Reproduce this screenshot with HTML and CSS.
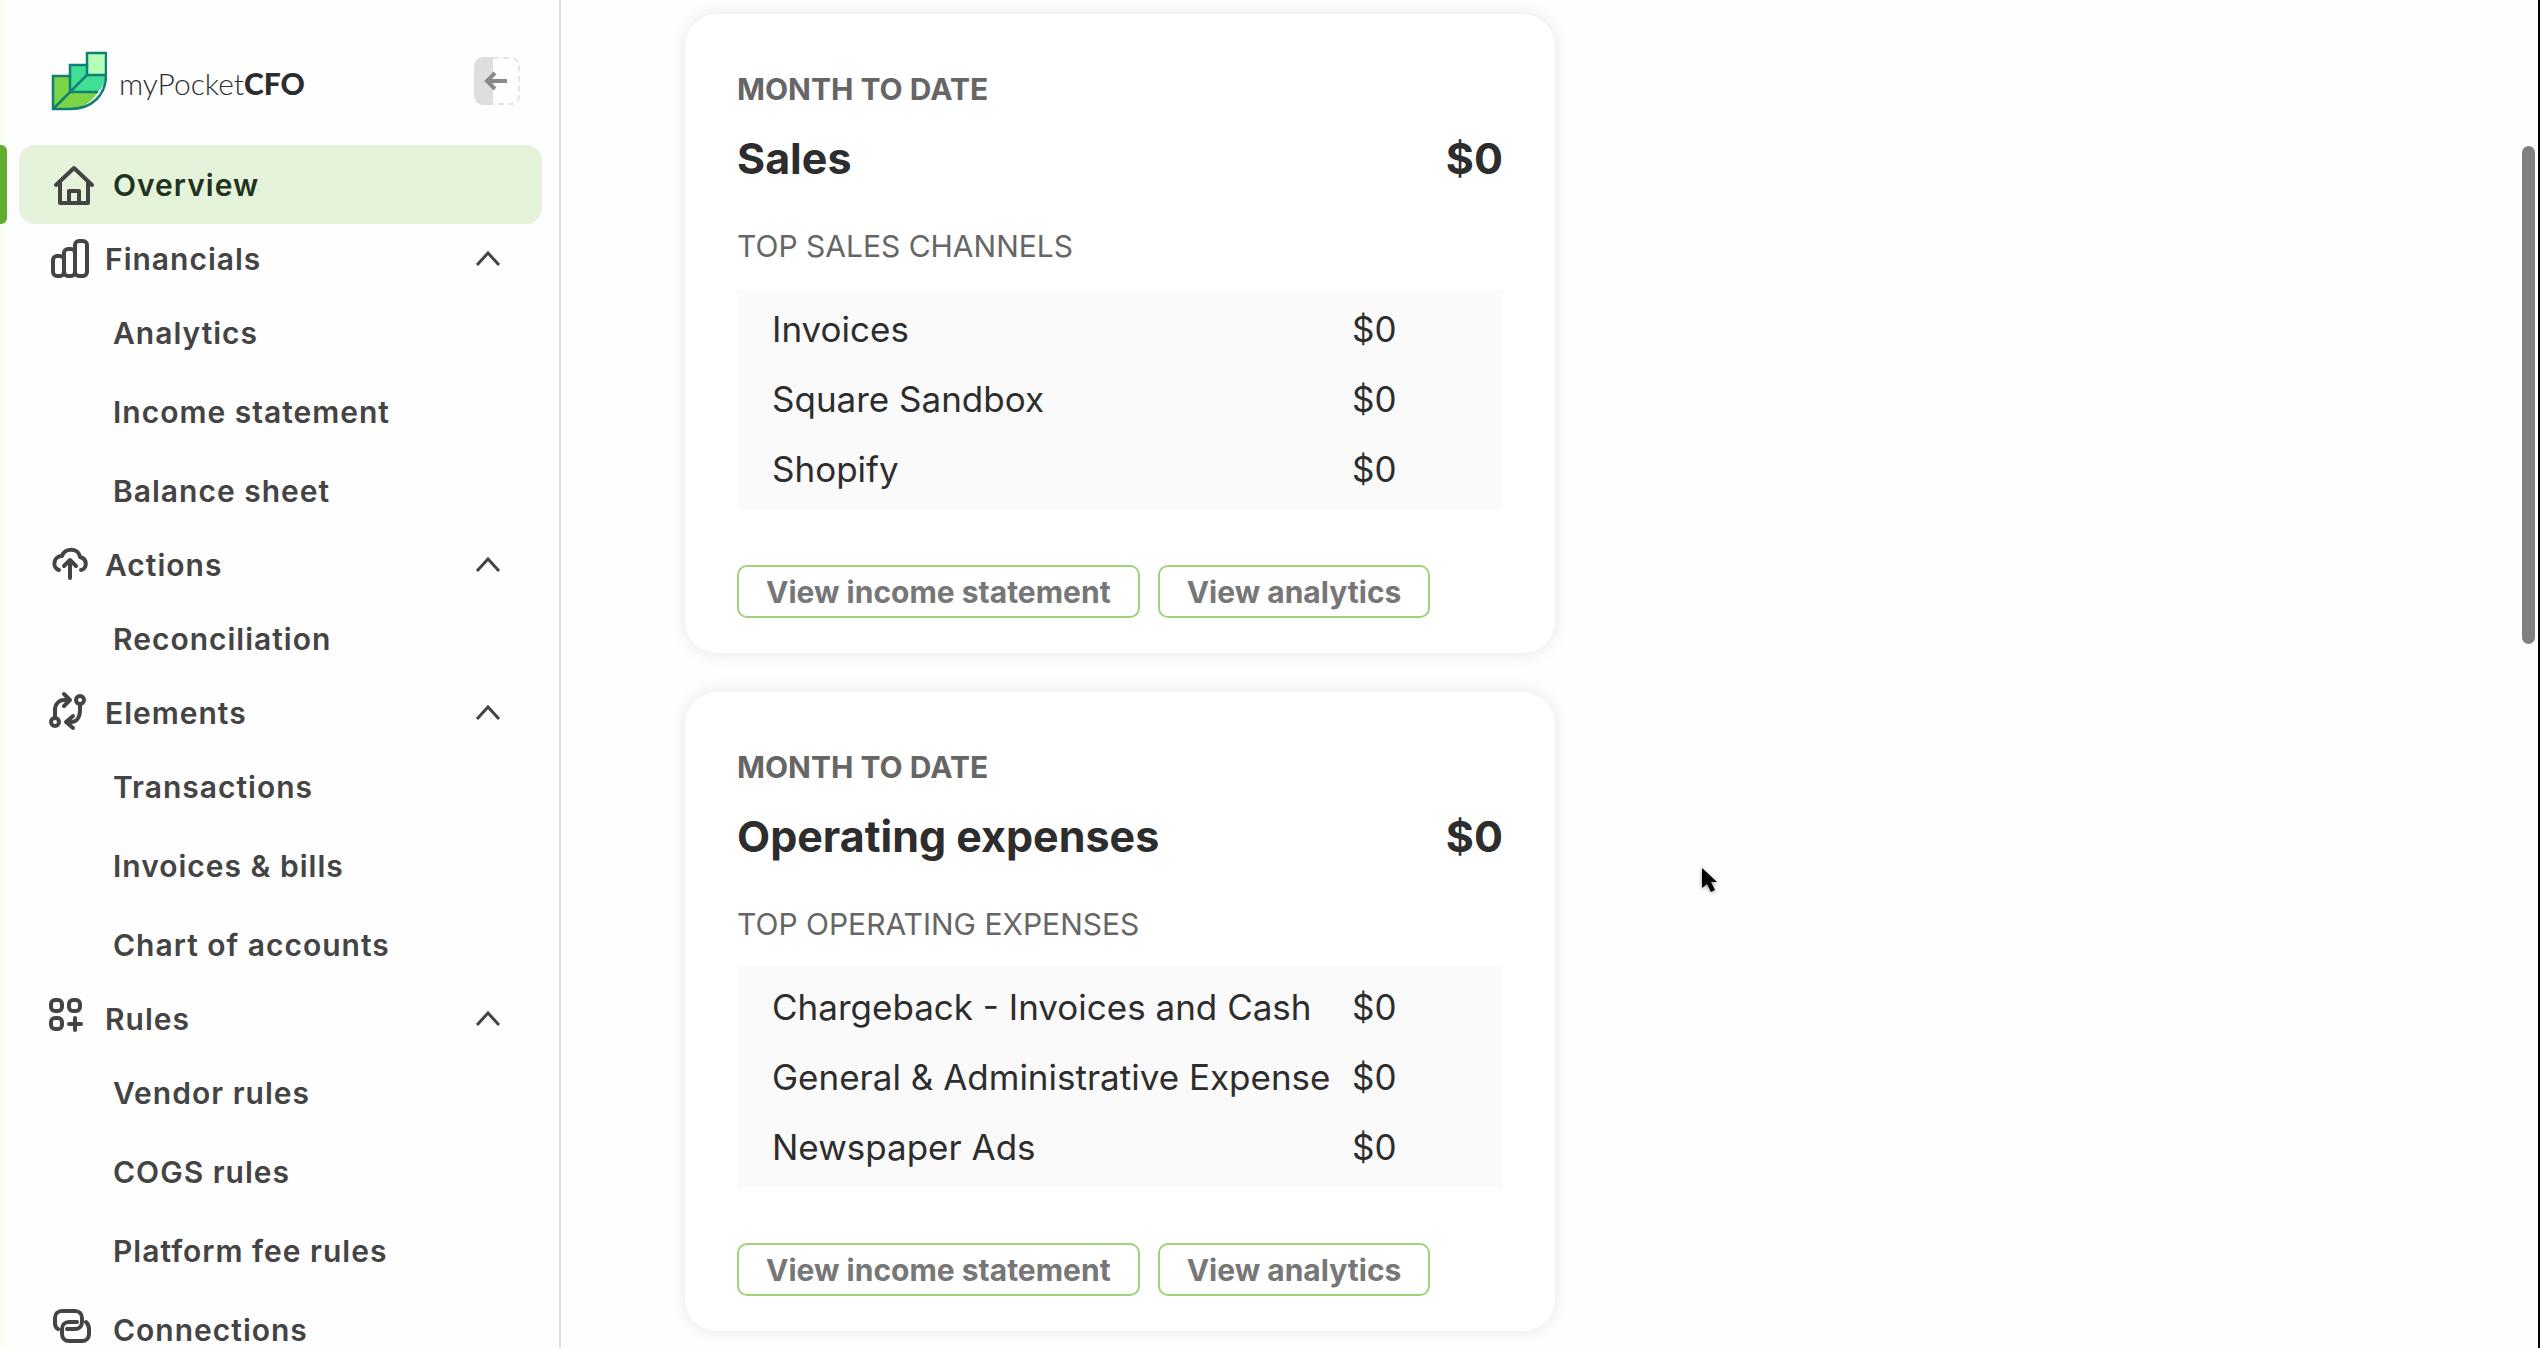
FILE: index.html
```html
<!DOCTYPE html>
<html lang="en">
<head>
    <meta charset="UTF-8">
    <meta name="viewport" content="width=device-width, initial-scale=1.0">
    <title>myPocketCFO</title>
    <link rel="stylesheet" href="styles.css">
</head>
<body>
<div class="app">
    <!-- Sidebar -->
    <aside class="sidebar">
        <div class="brand">
            <a class="logo" href="#">
                <svg class="logo-mark" viewBox="0 0 56 60" fill="none" stroke="#137f74" stroke-width="2.5">
                    <path d="M36 2h19v22H36z" fill="#b3ffb8" stroke="none"/>
                    <path d="M19 14h17v10h19c-1 7-4 13-8 17H19z" fill="#41df95" stroke="none"/>
                    <path d="M2 25h17v16h28c-7 11-17 17-31 17H2z" fill="#7ad443" stroke="none"/>
                    <path d="M2 58V25h17V14h17V2h19v22c0 20-14 34-36 34z"/>
                    <path d="M2 58l17-17 17-17V14M19 25v16h28M36 24h19"/>
                </svg>
                <span class="logo-text">myPocket<b>CFO</b></span>
            </a>
            <button class="collapse" type="button" aria-label="Collapse menu">
                <svg viewBox="0 0 48 50" fill="none">
                    <path d="M20 1H10a9 9 0 0 0-9 9v30a9 9 0 0 0 9 9h10z" fill="#dedede"/>
                    <path d="M20 2h18a8 8 0 0 1 8 8v30a8 8 0 0 1-8 8H20" stroke="#e4e4e4" stroke-width="2" stroke-dasharray="6 4"/>
                    <path d="M34 25H15M22 17l-8 8 8 8" stroke="#8a8a8a" stroke-width="4"/>
                </svg>
            </button>
        </div>

        <nav class="menu">
            <a class="item active" href="#">
                <svg class="icon" viewBox="0 0 40 40"><path d="M2 20L20 3l18 17M6 17v21h28V17M15 37V26h10v11"/></svg>
                Overview
            </a>

            <button class="group" type="button">
                <svg class="icon" viewBox="0 0 40 40"><rect x="1" y="17" width="11" height="20" rx="4"/><rect x="12" y="10" width="11" height="27" rx="4"/><rect x="23" y="2" width="12" height="35" rx="4"/></svg>
                Financials
                <svg class="chevron" viewBox="0 0 24 16"><path d="M1 14L12 2l11 12"/></svg>
            </button>
            <a class="item" href="#">Analytics</a>
            <a class="item" href="#">Income statement</a>
            <a class="item" href="#">Balance sheet</a>

            <button class="group" type="button">
                <svg class="icon" viewBox="0 0 40 40"><path d="M7 25c-7-2-6-14 3-14 3-9 17-8 18 1 8 2 7 12 1 13M18 33V15M12 21l6-6 6 6"/></svg>
                Actions
                <svg class="chevron" viewBox="0 0 24 16"><path d="M1 14L12 2l11 12"/></svg>
            </button>
            <a class="item" href="#">Reconciliation</a>

            <button class="group" type="button">
                <svg class="icon" viewBox="0 0 40 40"><circle cx="3" cy="29" r="4"/><circle cx="28" cy="7" r="4"/><path d="M3 25V17C3 11 7 7 12 7h5M12 1l6 6-6 6M28 11v6c0 8-4 12-9 12h-4M21 23l-7 6 7 6"/></svg>
                Elements
                <svg class="chevron" viewBox="0 0 24 16"><path d="M1 14L12 2l11 12"/></svg>
            </button>
            <a class="item" href="#">Transactions</a>
            <a class="item" href="#">Invoices &amp; bills</a>
            <a class="item" href="#">Chart of accounts</a>

            <button class="group" type="button">
                <svg class="icon" viewBox="0 0 40 40"><rect x="-1" y="1" width="11" height="11" rx="4"/><rect x="17" y="1" width="11" height="11" rx="4"/><rect x="-1" y="19" width="11" height="11" rx="4"/><path d="M23 19v12M17 25h12"/></svg>
                Rules
                <svg class="chevron" viewBox="0 0 24 16"><path d="M1 14L12 2l11 12"/></svg>
            </button>
            <a class="item" href="#">Vendor rules</a>
            <a class="item" href="#">COGS rules</a>
            <a class="item" href="#">Platform fee rules</a>

            <a class="item" href="#">
                <svg class="icon" viewBox="0 0 40 40"><path d="M4 19C2 18 1 16 1 13V8c0-4 3-7 7-7h13c4 0 7 3 7 7v4c0 4-3 7-7 7h-8"/><path d="M23 12h-8c-4 0-7 3-7 7v5c0 4 3 7 7 7h13c4 0 7-3 7-7v-5c0-3-1-5-3-7"/></svg>
                Connections
            </a>
        </nav>
    </aside>

    <!-- Cards -->
    <main class="content">
        <section class="card">
            <p class="period">MONTH TO DATE</p>
            <h2 class="title"><span>Sales</span><span>$0</span></h2>
            <h3 class="subtitle">TOP SALES CHANNELS</h3>
            <div class="list">
                <table>
                    <tr><td>Invoices</td><td>$0</td></tr>
                    <tr><td>Square Sandbox</td><td>$0</td></tr>
                    <tr><td>Shopify</td><td>$0</td></tr>
                </table>
            </div>
            <div class="actions">
                <button type="button">View income statement</button>
                <button type="button">View analytics</button>
            </div>
        </section>

        <section class="card">
            <p class="period">MONTH TO DATE</p>
            <h2 class="title"><span>Operating expenses</span><span>$0</span></h2>
            <h3 class="subtitle">TOP OPERATING EXPENSES</h3>
            <div class="list">
                <table>
                    <tr><td>Chargeback - Invoices and Cash</td><td>$0</td></tr>
                    <tr><td>General &amp; Administrative Expense</td><td>$0</td></tr>
                    <tr><td>Newspaper Ads</td><td>$0</td></tr>
                </table>
            </div>
            <div class="actions">
                <button type="button">View income statement</button>
                <button type="button">View analytics</button>
            </div>
        </section>
    </main>
</div>

<div class="scroll-thumb"></div>
<svg class="cursor" viewBox="0 0 16 26"><path d="M1 1v20l5-4 4 8 4-2-4-8h6z"/></svg>
</body>
</html>
```

FILE: styles.css
```css
* {
    box-sizing: border-box;
}

body {
    margin: 0;
    font-family: Inter, sans-serif;
    background-color: #fefefe;
    color: #2d2d2d;
    overflow: hidden;
}

button {
    font-family: inherit;
    cursor: pointer;
}

a {
    color: inherit;
    text-decoration: none;
}

.app {
    display: flex;
    height: 100vh;
    border-right: 2px solid #000;
}

/* Sidebar */
.sidebar {
    flex: 0 0 561px;
    border-left: 6px solid #f7fff1;
    border-right: 2px solid #dedede;
}

.brand {
    display: flex;
    align-items: center;
    justify-content: space-between;
    height: 145px;
    padding: 17px 38px 0 45px;
}

.logo {
    display: flex;
    align-items: center;
    gap: 12px;
}

.logo-mark {
    width: 56px;
    height: 60px;
}

.logo-text {
    padding-top: 4px;
    font-family: Lato, sans-serif;
    font-size: 30px;
    font-weight: 300;
}

.logo-text b {
    font-weight: 900;
}

.collapse {
    width: 48px;
    height: 50px;
    padding: 0;
    border: none;
    background: none;
}

.item,
.group {
    display: flex;
    align-items: center;
    font-size: 30px;
    font-weight: 600;
    letter-spacing: 1px;
    color: #444;
}

.item {
    position: relative;
    height: 79px;
    margin: 0 17px 0 13px;
    padding-left: 94px;
    border-radius: 16px;
}

.item .icon {
    position: absolute;
    left: 35px;
}

.active {
    background-color: #e4f3da;
    color: #223320;
}

/* green marker on the window edge */
.active::before {
    content: "";
    position: absolute;
    left: -19px;
    width: 7px;
    height: 79px;
    border-radius: 0 6px 6px 0;
    background-color: #5fae2e;
}

.group {
    width: 100%;
    height: 69px;
    padding: 0 59px 0 46px;
    border: none;
    background: none;
    gap: 13px;
}

.icon {
    width: 40px;
    height: 40px;
    fill: none;
    stroke: #444;
    stroke-width: 4;
    stroke-linecap: round;
    stroke-linejoin: round;
    overflow: visible;
}

.chevron {
    width: 24px;
    height: 16px;
    margin-left: auto;
    fill: none;
    stroke: #444;
    stroke-width: 3;
    overflow: visible;
}

/* Cards */
.content {
    flex: 1;
    padding: 14px 124px;
}

.card {
    max-width: 870px;
    margin-bottom: 39px;
    padding: 53px 52px 35px;
    border-radius: 32px;
    background-color: #fff;
    box-shadow: 0 0 16px 2px rgba(0, 0, 0, 0.08);
}

.period {
    margin: 0;
    font-size: 30px;
    font-weight: 700;
    line-height: 44px;
    color: #666;
}

.title {
    display: flex;
    justify-content: space-between;
    margin: 19px 0 38px;
    font-size: 43px;
    font-weight: 700;
    line-height: 56px;
}

.subtitle {
    margin: 0 0 21px;
    font-size: 30px;
    font-weight: 400;
    line-height: 44px;
    color: #666;
}

.list {
    padding: 5px 35px;
    background-color: #fafafa;
}

.list table {
    width: 100%;
    border-collapse: collapse;
}

.list td {
    height: 70px;
    padding: 0;
    font-size: 35px;
}

.list td:first-child {
    width: 580px;
}

.actions {
    display: flex;
    gap: 18px;
    margin-top: 56px;
}

.actions button {
    height: 53px;
    padding: 0 27px;
    border: 2px solid #9ed37c;
    border-radius: 10px;
    background-color: #fff;
    font-size: 30px;
    font-weight: 700;
    color: #777;
}

/* Overlays */
.scroll-thumb {
    position: absolute;
    top: 146px;
    right: 5px;
    width: 13px;
    height: 498px;
    border-radius: 7px;
    background-color: #7f7f7f;
}

.cursor {
    position: absolute;
    top: 867px;
    left: 1701px;
    width: 16px;
    height: 26px;
    fill: #000;
    filter: drop-shadow(0 1px 2px rgba(0, 0, 0, 0.4));
}
```
